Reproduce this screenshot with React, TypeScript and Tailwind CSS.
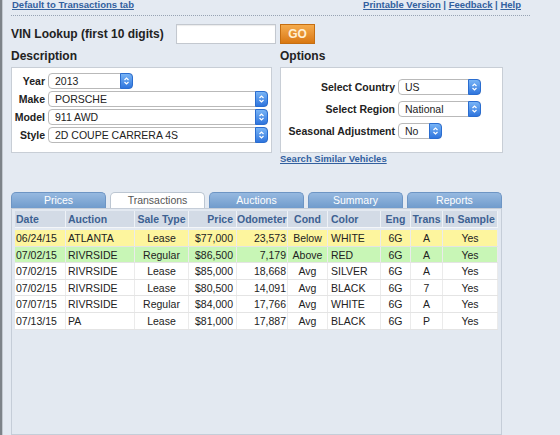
import React from "react";

function Stepper() {
  return (
    <span className="-my-px -mr-px flex w-[13px] items-center justify-center rounded-r-[4px] border border-[#2a6dd0] bg-gradient-to-b from-[#78b4f6] to-[#2f75dd]">
      <svg width="7" height="10" viewBox="0 0 7 10">
        <path d="M1.5 4 L3.5 2 L5.5 4" fill="none" stroke="white" strokeWidth="1.2" />
        <path d="M1.5 6 L3.5 8 L5.5 6" fill="none" stroke="white" strokeWidth="1.2" />
      </svg>
    </span>
  );
}

function Sel({ w, value }: { w: string; value: string }) {
  return (
    <div className={"flex h-[16px] items-stretch rounded-[4px] border border-[#b9b9b9] bg-white " + w}>
      <span className="flex-1 overflow-hidden whitespace-nowrap pl-[6px] text-[10.5px] leading-[14px] text-[#222]">{value}</span>
      <Stepper />
    </div>
  );
}

const cols = "grid grid-cols-[51px_69px_54px_48px_51px_40px_53px_30px_32px_55px]";

type Row = string[];
const rows: { bg: string; cells: Row }[] = [
  { bg: "bg-[#fdf59e]", cells: ["06/24/15", "ATLANTA", "Lease", "$77,000", "23,573", "Below", "WHITE", "6G", "A", "Yes"] },
  { bg: "bg-[#c8f6b6]", cells: ["07/02/15", "RIVRSIDE", "Regular", "$86,500", "7,179", "Above", "RED", "6G", "A", "Yes"] },
  { bg: "bg-white", cells: ["07/02/15", "RIVRSIDE", "Lease", "$85,000", "18,668", "Avg", "SILVER", "6G", "A", "Yes"] },
  { bg: "bg-white", cells: ["07/02/15", "RIVRSIDE", "Lease", "$80,500", "14,091", "Avg", "BLACK", "6G", "7", "Yes"] },
  { bg: "bg-white", cells: ["07/07/15", "RIVRSIDE", "Regular", "$84,000", "17,766", "Avg", "WHITE", "6G", "A", "Yes"] },
  { bg: "bg-white", cells: ["07/13/15", "PA", "Lease", "$81,000", "17,887", "Avg", "BLACK", "6G", "P", "Yes"] },
];

const align = [
  "text-left pl-[1px]",
  "text-left pl-[2px]",
  "text-center",
  "text-right pr-[3px]",
  "text-right pr-[1px]",
  "text-center",
  "text-left pl-[3px]",
  "text-center",
  "text-center",
  "text-center",
];

const headers = ["Date", "Auction", "Sale Type", "Price", "Odometer", "Cond", "Color", "Eng", "Trans", "In Sample"];

const tabs = ["Prices", "Transactions", "Auctions", "Summary", "Reports"];

export default function App() {
  return (
    <div className="flex h-[435px] w-[560px] overflow-hidden bg-[#e4eaf2] font-['Liberation_Sans',Arial,Helvetica,sans-serif] text-[#222]">
      <div className="w-[2px] bg-[#7d8389]" />
      <div className="w-[1px] bg-[#c3c9d0]" />
      <div className="ml-[8px] flex w-[519px] flex-col">
        {/* top links */}
        <div className="flex h-[16px] justify-between border-b border-dotted border-[#97a3b3] pl-[1px] pr-[9px] text-[9.5px] font-bold leading-[10px] text-[#32609f]">
          <a className="underline">Default to Transactions tab</a>
          <div>
            <a className="underline">Printable Version</a> | <a className="underline">Feedback</a> | <a className="underline">Help</a>
          </div>
        </div>

        {/* VIN */}
        <div className="mt-[8px] flex h-[20px] items-center">
          <div className="w-[165px] whitespace-nowrap text-[12px] font-bold leading-[16px] text-[#222]">VIN Lookup (first 10 digits)</div>
          <div className="h-[20px] w-[100px] border border-[#c3c8cf] bg-white shadow-[inset_0_1px_1px_rgba(0,0,0,0.08)]" />
          <div className="ml-[4px] flex h-[20px] w-[35px] items-center justify-center border border-[#c56e12] bg-gradient-to-b from-[#f5ab4c] to-[#d9780e] text-[12px] font-bold text-[#fff0d4]">
            GO
          </div>
        </div>

        {/* description / options */}
        <div className="mt-[5px] flex gap-[8px]">
          <div className="flex w-[261px] flex-col">
            <div className="h-[18px] text-[12px] font-bold leading-[15px] text-[#222]">Description</div>
            <div className="flex h-[86px] flex-col gap-[2px] border border-[#c8ced6] bg-white pt-[5px]">
              {[
                ["Year", "2013", "w-[85px]"],
                ["Make", "PORSCHE", "w-[220px]"],
                ["Model", "911 AWD", "w-[220px]"],
                ["Style", "2D COUPE CARRERA 4S", "w-[220px]"],
              ].map(([l, v, w]) => (
                <div key={l} className="flex items-center gap-[3px]">
                  <div className="w-[33px] whitespace-nowrap text-right text-[10.5px] font-bold leading-[16px] text-[#222]">{l}</div>
                  <Sel w={w} value={v} />
                </div>
              ))}
            </div>
          </div>
          <div className="flex w-[223px] flex-col">
            <div className="h-[18px] text-[12px] font-bold leading-[15px] text-[#222]">Options</div>
            <div className="flex h-[86px] flex-col gap-[6px] border border-[#c8ced6] bg-white pt-[11px]">
              {[
                ["Select Country", "US", "w-[83px]"],
                ["Select Region", "National", "w-[83px]"],
                ["Seasonal Adjustment", "No", "w-[44px]"],
              ].map(([l, v, w]) => (
                <div key={l} className="flex items-center gap-[3px]">
                  <div className="w-[114px] whitespace-nowrap text-right text-[10.5px] font-bold leading-[16px] text-[#222]">{l}</div>
                  <Sel w={w} value={v} />
                </div>
              ))}
            </div>
            <a className="h-[11px] text-[9.5px] font-bold leading-[11px] text-[#32609f] underline">Search Similar Vehicles</a>
          </div>
        </div>

        {/* tabs */}
        <div className="mt-[28px] flex w-[491px] gap-[4px]">
          {tabs.map((t, i) =>
            i === 1 ? (
              <div key={t} className="h-[16px] flex-1 rounded-t-[5px] border border-b-0 border-[#bcc6d2] bg-white text-center text-[10.5px] leading-[15px] text-[#555]">
                {t}
              </div>
            ) : (
              <div key={t} className="h-[16px] flex-1 rounded-t-[5px] border border-b-0 border-[#6d95c4] bg-gradient-to-b from-[#96b9e0] to-[#709bcc] text-center text-[10.5px] leading-[15px] text-white">
                {t}
              </div>
            )
          )}
        </div>

        {/* panel */}
        <div className="w-[491px] flex-1 border border-[#c5cdd8] bg-[#e3e9f1] px-[3px] pt-[2px]">
          <div className={cols + " h-[17px] border-b border-[#f4f6f9]"}>
            {headers.map((h, i) => (
              <div
                key={h}
                className={
                  "overflow-hidden whitespace-nowrap border-r border-[#eef2f7] bg-[#d3dbe6] text-[10.5px] font-bold leading-[16px] text-[#3d6192] " +
                  align[i]
                }
              >
                {h}
              </div>
            ))}
          </div>
          <div className="mt-[2px]">
            {rows.map((r, ri) => (
              <div key={ri} className={cols + " h-[16.6px] border-b border-[#e4e4e4] " + r.bg}>
                {r.cells.map((c, i) => (
                  <div
                    key={i}
                    className={"overflow-hidden whitespace-nowrap border-r border-[#ebebeb] text-[10.5px] leading-[16px] text-[#222] " + align[i]}
                  >
                    {c}
                  </div>
                ))}
              </div>
            ))}
          </div>
        </div>
      </div>
    </div>
  );
}
